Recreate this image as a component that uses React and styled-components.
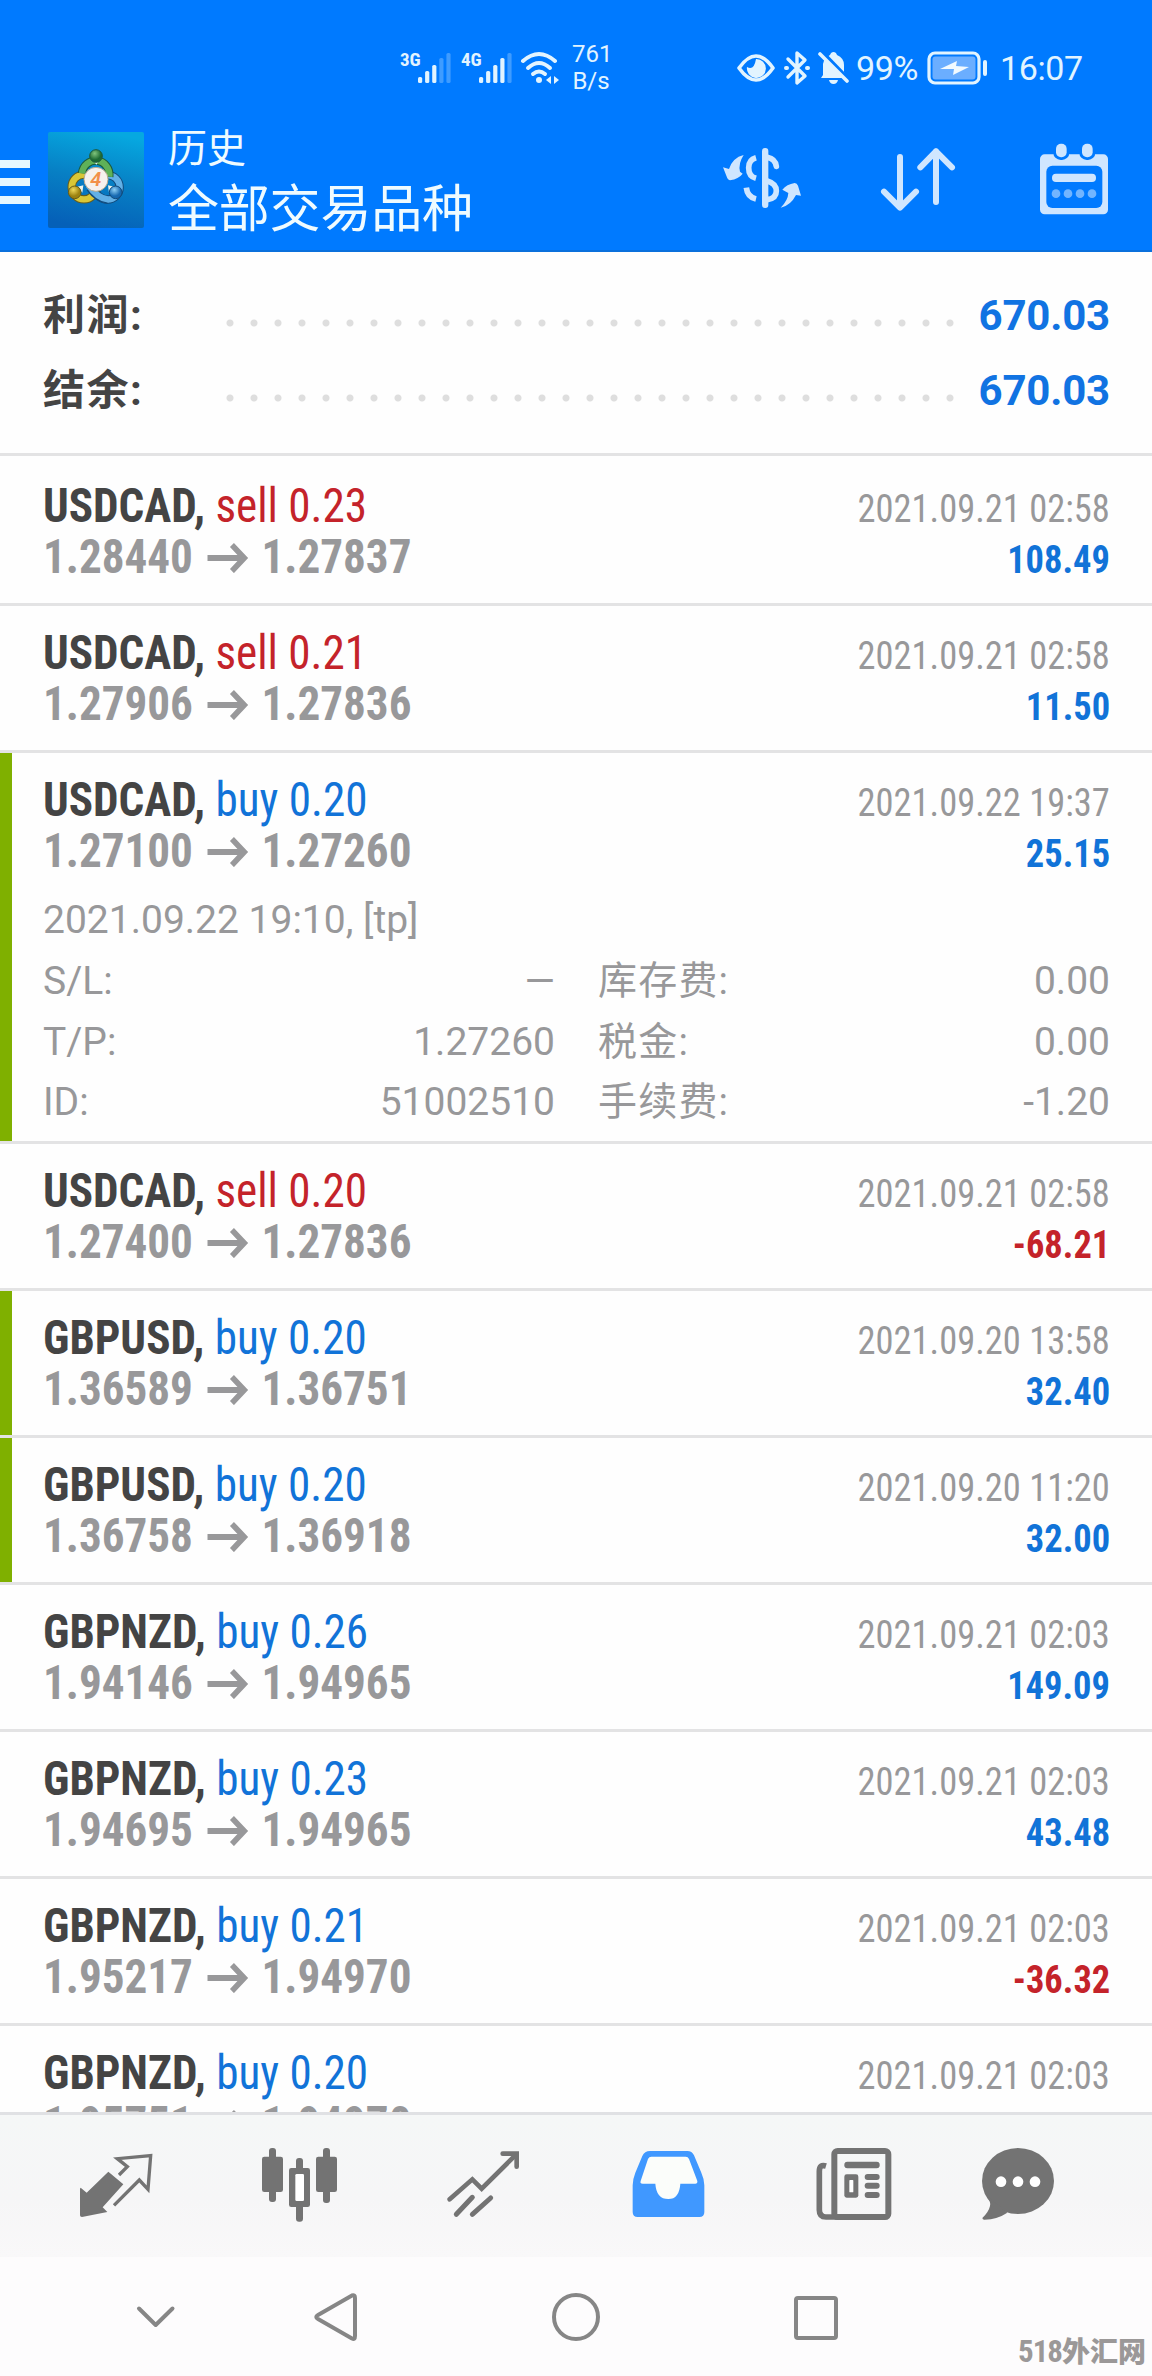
import React from 'react';
import styled, { createGlobalStyle } from 'styled-components';

const deals = [
  { symbol: 'USDCAD', side: 'sell', lots: '0.23', open: '1.28440', close: '1.27837', time: '2021.09.21 02:58', profit: '108.49' },
  { symbol: 'USDCAD', side: 'sell', lots: '0.21', open: '1.27906', close: '1.27836', time: '2021.09.21 02:58', profit: '11.50' },
  {
    symbol: 'USDCAD', side: 'buy', lots: '0.20', open: '1.27100', close: '1.27260', time: '2021.09.22 19:37', profit: '25.15', marked: true,
    details: {
      opened: '2021.09.22 19:10, [tp]',
      fields: [
        ['S/L:', '—'], ['库存费:', '0.00'],
        ['T/P:', '1.27260'], ['税金:', '0.00'],
        ['ID:', '51002510'], ['手续费:', '-1.20'],
      ],
    },
  },
  { symbol: 'USDCAD', side: 'sell', lots: '0.20', open: '1.27400', close: '1.27836', time: '2021.09.21 02:58', profit: '-68.21' },
  { symbol: 'GBPUSD', side: 'buy', lots: '0.20', open: '1.36589', close: '1.36751', time: '2021.09.20 13:58', profit: '32.40', marked: true },
  { symbol: 'GBPUSD', side: 'buy', lots: '0.20', open: '1.36758', close: '1.36918', time: '2021.09.20 11:20', profit: '32.00', marked: true },
  { symbol: 'GBPNZD', side: 'buy', lots: '0.26', open: '1.94146', close: '1.94965', time: '2021.09.21 02:03', profit: '149.09' },
  { symbol: 'GBPNZD', side: 'buy', lots: '0.23', open: '1.94695', close: '1.94965', time: '2021.09.21 02:03', profit: '43.48' },
  { symbol: 'GBPNZD', side: 'buy', lots: '0.21', open: '1.95217', close: '1.94970', time: '2021.09.21 02:03', profit: '-36.32' },
  { symbol: 'GBPNZD', side: 'buy', lots: '0.20', open: '1.95751', close: '1.94970', time: '2021.09.21 02:03' },
];

const Signal = ({ level }) => (
  <svg width="33" height="32" viewBox="0 0 33 32">
    {[6, 12, 18, 25, 30].map((h, i) => (
      <rect key={h} x={i * 7.1} y={31 - h} width="4.2" height={h} rx="1.6" fill="#e2f4ff" opacity={i < level ? 1 : 0.28} />
    ))}
  </svg>
);

const StatusBar = () => (
  <StyledStatus>
    <NetLabel>3G</NetLabel>
    <Signal level={3} />
    <NetLabel className="second">4G</NetLabel>
    <Signal level={4} />
    <svg className="wifi" width="40" height="34" viewBox="0 0 40 34" fill="none" stroke="#e2f4ff" strokeWidth="4" strokeLinecap="round">
      <path d="M3 10 Q19 -4 35 10" />
      <path d="M8 17 Q19 7 30 17" />
      <path d="M13 23 Q19 18 25 23" />
      <circle cx="19" cy="29" r="3" fill="#e2f4ff" stroke="none" />
      <path d="M26 29 l5 -4 v8z M34 25 l5 4 -5 4z" fill="#e2f4ff" stroke="none" />
    </svg>
    <Speed>
      <div>761</div>
      <div>B/s</div>
    </Speed>
    <svg className="eye" width="40" height="30" viewBox="0 0 40 30">
      <path d="M3 15 Q20 -9 37 15 Q20 39 3 15z" fill="none" stroke="#e2f4ff" strokeWidth="3.6" strokeLinejoin="round" />
      <path d="M20 6 A9.5 9.5 0 1 1 11 14 Q18 18 20 6z" fill="#e2f4ff" />
    </svg>
    <svg className="bluetooth" width="26" height="36" viewBox="0 0 26 36" fill="none" stroke="#e2f4ff" strokeWidth="3.4" strokeLinejoin="round" strokeLinecap="round">
      <path d="M4 9 L21 26 L13 33 V3 L21 10 L4 27" />
      <path d="M2 18 h1 M23 18 h1" strokeWidth="4" />
    </svg>
    <svg className="bell" width="32" height="34" viewBox="0 0 32 34">
      <path d="M5 24 V13 Q6 7 12 4 Q13 1 15.5 1 Q18 1 19 4 Q26 7 26 14 V21 L29 27 H3z" fill="#e2f4ff" />
      <path d="M11 29 h9 q-1 4 -4.5 4 t-4.5 -4z" fill="#e2f4ff" />
      <path d="M4 1 L32 30" stroke="#007aff" strokeWidth="4" />
      <path d="M2 3 L29 30" stroke="#e2f4ff" strokeWidth="3.6" strokeLinecap="round" />
    </svg>
    <Percent>99%</Percent>
    <svg className="battery" width="62" height="34" viewBox="0 0 62 34">
      <rect x="2" y="2" width="50" height="30" rx="6" fill="none" stroke="#e2f4ff" strokeWidth="3.2" />
      <rect x="5.5" y="5.5" width="43" height="23" rx="3" fill="#6baeff" />
      <path d="M13 18 L30 10 L29 15 L42 16 L26 24 L27 18z" fill="#f2faff" />
      <rect x="56" y="9" width="4" height="16" rx="2" fill="#e2f4ff" />
    </svg>
    <Clock>16:07</Clock>
  </StyledStatus>
);

const AppLogo = () => (
  <svg className="logo" width="96" height="96" viewBox="0 0 288 288">
    <defs>
      <linearGradient id="logoBg" x1="0.6" y1="0" x2="0.4" y2="1">
        <stop offset="0" stopColor="#06a8e0" />
        <stop offset="0.5" stopColor="#077fc4" />
        <stop offset="1" stopColor="#0560b8" />
      </linearGradient>
      <radialGradient id="green" cx="0.4" cy="0.3"><stop offset="0" stopColor="#7fc47c" /><stop offset="1" stopColor="#1e6b33" /></radialGradient>
      <radialGradient id="yellow" cx="0.4" cy="0.3"><stop offset="0" stopColor="#f0d95a" /><stop offset="1" stopColor="#9c8210" /></radialGradient>
      <radialGradient id="blue" cx="0.4" cy="0.3"><stop offset="0" stopColor="#8fd0f5" /><stop offset="1" stopColor="#1668b0" /></radialGradient>
    </defs>
    <rect width="288" height="288" rx="6" fill="url(#logoBg)" />
    <g fill="none">
      <circle cx="178" cy="166" r="37" stroke="#124b7c" strokeWidth="25" />
      <circle cx="178" cy="166" r="37" stroke="#62b0e6" strokeWidth="19" />
      <circle cx="108" cy="165" r="37" stroke="#665c1c" strokeWidth="25" />
      <circle cx="108" cy="165" r="37" stroke="#d9c636" strokeWidth="19" />
      <path d="M102 124 A41 43 0 1 1 184 134" stroke="#1c5a3c" strokeWidth="25" />
      <path d="M102 124 A41 43 0 1 1 184 134" stroke="#5fb158" strokeWidth="19" />
      <path d="M126 168 Q148 200 180 203" stroke="#124b7c" strokeWidth="25" />
      <path d="M122 160 Q148 200 182 203" stroke="#62b0e6" strokeWidth="19" />
    </g>
    <path d="M134 82 h22 l-11 16z M88 164 l18 -4 -3 22z M198 164 l-18 -4 3 22z" fill="#eef3ea" />
    <circle cx="144" cy="72" r="19" fill="url(#green)" stroke="#1c5a3c" strokeWidth="3" />
    <circle cx="80" cy="181" r="19" fill="url(#yellow)" stroke="#665c1c" strokeWidth="3" />
    <circle cx="203" cy="181" r="19" fill="url(#blue)" stroke="#124b7c" strokeWidth="3" />
    <circle cx="144" cy="142" r="36" fill="#f6f1ee" stroke="#b9a98e" strokeWidth="3" />
    <text x="143" y="163" textAnchor="middle" fontFamily="Roboto, sans-serif" fontStyle="italic" fontWeight="600" fontSize="60" fill="#f2904a">4</text>
  </svg>
);

const CurrencyIcon = () => (
  <svg width="84" height="84" viewBox="0 0 252 252" fill="#cfe6ff">
    <rect x="126" y="33" width="19" height="180" rx="9" />
    <g fill="none" stroke="#cfe6ff" strokeWidth="17">
      <path d="M108 62 Q86 68 86 92 Q86 118 108 124" />
      <path d="M79 152 Q82 180 108 186" />
      <path d="M142 61 Q166 66 169 88" strokeLinecap="round" />
      <path d="M142 132 Q169 140 169 162 Q169 184 142 188" />
    </g>
    <path d="M71 54 Q54 80 60 104 L68 110 Q56 126 30 130 Q26 130 22 124 L9 91 L27 96 Q38 62 71 54z" />
    <path d="M182 212 Q204 190 205 168 L187 158 Q200 142 224 138 Q231 138 234 146 L243 176 L228 174 Q212 206 182 212z" />
  </svg>
);

const SortIcon = () => (
  <svg width="84" height="84" viewBox="0 0 252 252" fill="none" stroke="#cfe6ff" strokeWidth="18" strokeLinecap="round" strokeLinejoin="round">
    <path d="M72 60 V211 M24 164 L72 212 L120 164" />
    <path d="M180 195 V43 M133 91 L180 43 L228 91" />
  </svg>
);

const CalendarIcon = () => (
  <svg width="84" height="84" viewBox="0 0 252 252" fill="#cfe6ff">
    <rect x="24" y="52" width="204" height="180" rx="14" />
    <rect x="64" y="12" width="48" height="57" rx="22" fill="#007aff" />
    <rect x="142" y="12" width="48" height="57" rx="22" fill="#007aff" />
    <rect x="43" y="86" width="168" height="127" rx="18" fill="#007aff" />
    <rect x="72" y="20" width="32" height="41" rx="15" />
    <rect x="150" y="20" width="32" height="41" rx="15" />
    <rect x="60" y="110" width="132" height="25" rx="12" />
    {[72, 108, 144, 180].map((x) => <circle key={x} cx={x} cy="170" r="13" opacity="0.55" />)}
  </svg>
);

const Arrow = () => (
  <svg width="45" height="32" viewBox="0 0 45 32" fill="none" stroke="#98989a" strokeWidth="6">
    <path d="M1 17 H41 M27 4 L40 17 L27 30" />
  </svg>
);

const tabs = [
  {
    name: 'quotes',
    icon: (
      <>
        <path d="M18 140 L20 137 L38 152 L103 89 L148 127 L86 196 L100 210 L24 225 Q18 225 18 220z" />
        <path d="M135 99 L160 74 L130 50 L230 41 L222 142 L196 114 L120 190" fill="none" stroke="#737373" strokeWidth="10" />
      </>
    ),
  },
  {
    name: 'charts',
    icon: (
      <>
        <rect x="12" y="44" width="63" height="106" rx="7" />
        <rect x="33" y="18" width="21" height="162" rx="9" />
        <rect x="174" y="44" width="63" height="106" rx="7" />
        <rect x="195" y="18" width="21" height="165" rx="9" />
        <rect x="114" y="48" width="21" height="191" rx="9" />
        <rect x="93" y="78" width="63" height="117" rx="7" />
        <rect x="112" y="96" width="26" height="81" rx="4" fill="#fff" />
      </>
    ),
  },
  {
    name: 'trade',
    icon: (
      <g fill="none" stroke="#737373" strokeWidth="14" strokeLinecap="round">
        <path d="M23 172 L91 112 L119 140 L222 38" />
        <path d="M182 35 H224 V74" />
        <path d="M91 166 L43 217 M146 168 L91 217" strokeWidth="15" />
      </g>
    ),
  },
  {
    name: 'history',
    icon: (
      <>
        <path fill="#4098ff" d="M72 27 H184 Q198 27 204 40 L226 92 Q235 112 235 130 V210 Q235 225 220 225 H35 Q20 225 20 210 V130 Q20 112 28 92 L49 42 Q56 27 72 27z" />
        <path fill="#fbfdfa" d="M76 44 H179 Q186 44 189 51 L214 117 Q215 125 208 125 H163 Q160 171 127 171 Q91 171 88 125 H50 Q41 125 44 117 L66 51 Q69 44 76 44z" />
      </>
    ),
  },
  {
    name: 'news',
    icon: (
      <>
        <path d="M48 72 Q28 66 28 88 V204 Q28 225 48 225 H150" fill="none" stroke="#737373" strokeWidth="17" />
        <rect x="73" y="27" width="162" height="198" rx="10" fill="none" stroke="#737373" strokeWidth="18" />
        <rect x="103" y="59" width="106" height="20" rx="9" />
        <rect x="103" y="97" width="42" height="70" rx="7" />
        <rect x="118" y="114" width="12" height="37" rx="2" fill="#fff" />
        <rect x="164" y="96" width="45" height="18" rx="9" />
        <rect x="164" y="122" width="45" height="18" rx="9" />
        <rect x="164" y="150" width="45" height="18" rx="9" />
      </>
    ),
  },
  {
    name: 'chat',
    icon: (
      <>
        <ellipse cx="126" cy="117" rx="108" ry="99" />
        <path d="M32 160 Q46 184 42 192 Q38 210 19 228 Q20 234 26 233 Q64 232 94 212z" />
        <circle cx="75" cy="119" r="16" fill="#fff" />
        <circle cx="126" cy="119" r="16" fill="#fff" />
        <circle cx="177" cy="119" r="16" fill="#fff" />
      </>
    ),
  },
];

const Deal = ({ deal }) => (
  <DealRow $marked={deal.marked}>
    <DealLine>
      <Symbol>{deal.symbol}, <Side $side={deal.side}>{deal.side} {deal.lots}</Side></Symbol>
      <Time>{deal.time}</Time>
    </DealLine>
    <DealLine>
      <Prices><Price>{deal.open}</Price><Arrow /><Price>{deal.close}</Price></Prices>
      {deal.profit && <Profit $negative={deal.profit.startsWith('-')}>{deal.profit}</Profit>}
    </DealLine>
    {deal.details && (
      <Details>
        <div className="opened">{deal.details.opened}</div>
        {deal.details.fields.map(([label, value], i) => (
          <Field key={label} $cjk={i % 2 === 1}>
            <span className="label">{label}</span>
            <span>{value}</span>
          </Field>
        ))}
      </Details>
    )}
  </DealRow>
);

const App = () => (
  <Screen>
    <GlobalStyle />
    <Header>
      <StatusBar />
      <Toolbar>
        <MenuButton><i /><i /><i /></MenuButton>
        <AppLogo />
        <Titles>
          <div className="section">历史</div>
          <div className="filter">全部交易品种</div>
        </Titles>
        <Actions>
          <CurrencyIcon />
          <SortIcon />
          <CalendarIcon />
        </Actions>
      </Toolbar>
    </Header>
    <Summary>
      {['利润:', '结余:'].map((label) => (
        <SummaryRow key={label}>
          <span className="label">{label}</span>
          <Dots />
          <span className="value">670.03</span>
        </SummaryRow>
      ))}
    </Summary>
    <DealList>
      {deals.map((deal, i) => <Deal key={i} deal={deal} />)}
    </DealList>
    <TabBar>
      {tabs.map((tab) => (
        <svg key={tab.name} width="84" height="84" viewBox="0 0 252 252" fill="#737373">{tab.icon}</svg>
      ))}
    </TabBar>
    <SystemNav>
      <svg width="48" height="48" viewBox="0 0 48 48"><path d="M7 15.5 L23.7 32 L40.5 15.5" /></svg>
      <svg width="48" height="48" viewBox="0 0 48 48"><path d="M6 22 L40 2.500 Q43 1.500 43 5 V43 Q43 47 40 45.500 L6 26 Q2.500 24 6 22z" /></svg>
      <svg width="48" height="48" viewBox="0 0 48 48"><circle cx="24" cy="24" r="22" /></svg>
      <svg width="48" height="48" viewBox="0 0 48 48"><rect x="4" y="5" width="40" height="40" rx="2" /></svg>
    </SystemNav>
    <Watermark><b>518</b>外汇网</Watermark>
  </Screen>
);

const GlobalStyle = createGlobalStyle`
  body {
    margin: 0;
    background: #fefefe;
  }
  svg {
    display: block;
    flex: none;
  }
`;

const Screen = styled.div`
  position: relative;
  display: flex;
  flex-direction: column;
  width: 1152px;
  height: 2376px;
  overflow: hidden;
  background: #fefefe;
  font-family: Roboto, 'Noto Sans CJK SC', sans-serif;
  white-space: nowrap;
`;

const Header = styled.header`
  box-sizing: border-box;
  height: 252px;
  background: #007aff;
  border-bottom: 2px solid #0a70dc;
`;

const StyledStatus = styled.div`
  display: flex;
  align-items: center;
  box-sizing: border-box;
  height: 132px;
  padding: 4px 0 0 400px;
  color: #e2f4ff;
  & .wifi {
    margin-left: 8px;
  }
  & .eye {
    margin-left: 126px;
  }
  & .bluetooth {
    margin-left: 8px;
  }
  & .bell {
    margin-left: 8px;
  }
  & .battery {
    margin-left: 5px;
  }
`;

const NetLabel = styled.span`
  width: 18px;
  font-family: 'Roboto Condensed', Roboto, sans-serif;
  font-stretch: 75%;
  font-size: 19px;
  font-weight: 700;
  line-height: 20px;
  margin-bottom: 16px;
  &.second {
    margin-left: 10px;
  }
`;

const Speed = styled.div`
  width: 38px;
  margin-left: 12px;
  font-size: 24px;
  line-height: 27px;
  text-align: center;
`;

const Percent = styled.span`
  width: 66px;
  margin-left: 6px;
  font-size: 34px;
  letter-spacing: -0.4px;
`;

const Clock = styled.span`
  margin-left: 11px;
  font-size: 34px;
  letter-spacing: -0.4px;
`;

const Toolbar = styled.div`
  display: flex;
  height: 118px;
  & .logo {
    margin-left: 18px;
  }
`;

const MenuButton = styled.div`
  display: flex;
  flex-direction: column;
  gap: 10px;
  width: 30px;
  padding-top: 28px;
  & i {
    height: 8px;
    background: #e6f8ff;
  }
`;

const Titles = styled.div`
  flex: 1;
  margin-left: 24px;
  font-family: 'Noto Sans CJK SC', sans-serif;
  color: #effbff;
  & .section {
    margin-top: -12px;
    font-size: 39px;
    line-height: 50px;
  }
  & .filter {
    font-size: 51px;
    line-height: 70px;
    letter-spacing: -0.2px;
  }
`;

const Actions = styled.div`
  display: flex;
  gap: 72px;
  padding: 5px 36px 0 0;
`;

const Summary = styled.section`
  box-sizing: border-box;
  height: 204px;
  padding: 26px 42px 0 43px;
  border-bottom: 3px solid #e3e3e4;
`;

const SummaryRow = styled.div`
  display: flex;
  align-items: center;
  height: 75px;
  font-size: 42px;
  font-weight: 700;
  line-height: 75px;
  & .label {
    width: 175px;
    letter-spacing: 1.5px;
    color: #444;
  }
  & .value {
    flex: 1;
    text-align: right;
    letter-spacing: -0.2px;
    color: #1173e2;
  }
`;

const Dots = styled.div`
  width: 744px;
  height: 8px;
  margin-top: 15px;
  background: radial-gradient(circle at 12px 4px, #dedede 3px, transparent 4px) 0 0 / 24px 8px;
`;

const DealList = styled.main`
  height: 1656px;
  overflow: hidden;
  & > :first-child {
    padding-top: 24px;
  }
`;

const DealRow = styled.article`
  padding: 21px 42px 21px 43px;
  border-bottom: 3px solid #e3e3e4;
  box-shadow: ${(p) => (p.$marked ? 'inset 12px 0 #7fb000' : 'none')};
  &:has(.opened) {
    padding-bottom: 8px;
  }
`;

/* the condensed face is set a little narrower still */
const DealLine = styled.div`
  display: flex;
  align-items: baseline;
  justify-content: space-between;
  height: 51px;
  line-height: 51px;
  font-family: 'Roboto Condensed', Roboto, sans-serif;
  font-stretch: 75%;
  & > :first-child {
    transform: scaleX(0.94);
    transform-origin: left;
  }
  & > :last-child:not(:first-child) {
    transform: scaleX(0.935);
    transform-origin: right;
  }
`;

const Symbol = styled.span`
  font-size: 48px;
  font-weight: 700;
  color: #444;
`;

const Side = styled.span`
  font-weight: 400;
  color: ${(p) => (p.$side === 'buy' ? '#1173d8' : '#c4232a')};
`;

const Time = styled.span`
  font-size: 39px;
  color: #98989a;
`;

const Prices = styled.span`
  display: flex;
  align-items: center;
  gap: 14px;
`;

const Price = styled.span`
  font-size: 48px;
  font-weight: 700;
  color: #98989a;
`;

const Profit = styled.span`
  font-size: 39px;
  font-weight: 700;
  color: ${(p) => (p.$negative ? '#c4232a' : '#1173d8')};
`;

const Details = styled.div`
  display: grid;
  grid-template-columns: 1fr 1fr;
  column-gap: 43px;
  margin-top: 14px;
  font-size: 39px;
  line-height: 60.75px;
  color: #98989a;
  & .opened {
    grid-column: 1 / 3;
  }
`;

const Field = styled.div`
  display: flex;
  justify-content: space-between;
  & .label {
    letter-spacing: ${(p) => (p.$cjk ? '1.2px' : '0')};
  }
`;

const TabBar = styled.nav`
  display: grid;
  grid-template-columns: repeat(5, 184px) 148px;
  align-items: center;
  justify-items: center;
  box-sizing: border-box;
  height: 145px;
  padding: 0 0 4px 24px;
  border-top: 3px solid #e0e1e4;
  background: linear-gradient(#f5f7f7, #f6f6f7 60%, #f9f8f9);
`;

const SystemNav = styled.nav`
  display: grid;
  grid-template-columns: 180px 240px 240px 48px;
  box-sizing: border-box;
  height: 119px;
  padding: 36px 0 0 132px;
  background: #fdfcfd;
  & svg {
    fill: none;
    stroke: #868686;
    stroke-width: 4;
    stroke-linecap: round;
    stroke-linejoin: round;
  }
`;

const Watermark = styled.div`
  position: absolute;
  right: 6px;
  bottom: 6px;
  font-family: 'Noto Sans CJK SC', sans-serif;
  font-size: 28px;
  font-weight: 900;
  line-height: 36px;
  color: #9b9898;
  & b {
    font-family: 'Roboto Condensed', Roboto, sans-serif;
    font-stretch: 75%;
    font-size: 31px;
    font-weight: 700;
    letter-spacing: -1px;
  }
`;

export default App;
